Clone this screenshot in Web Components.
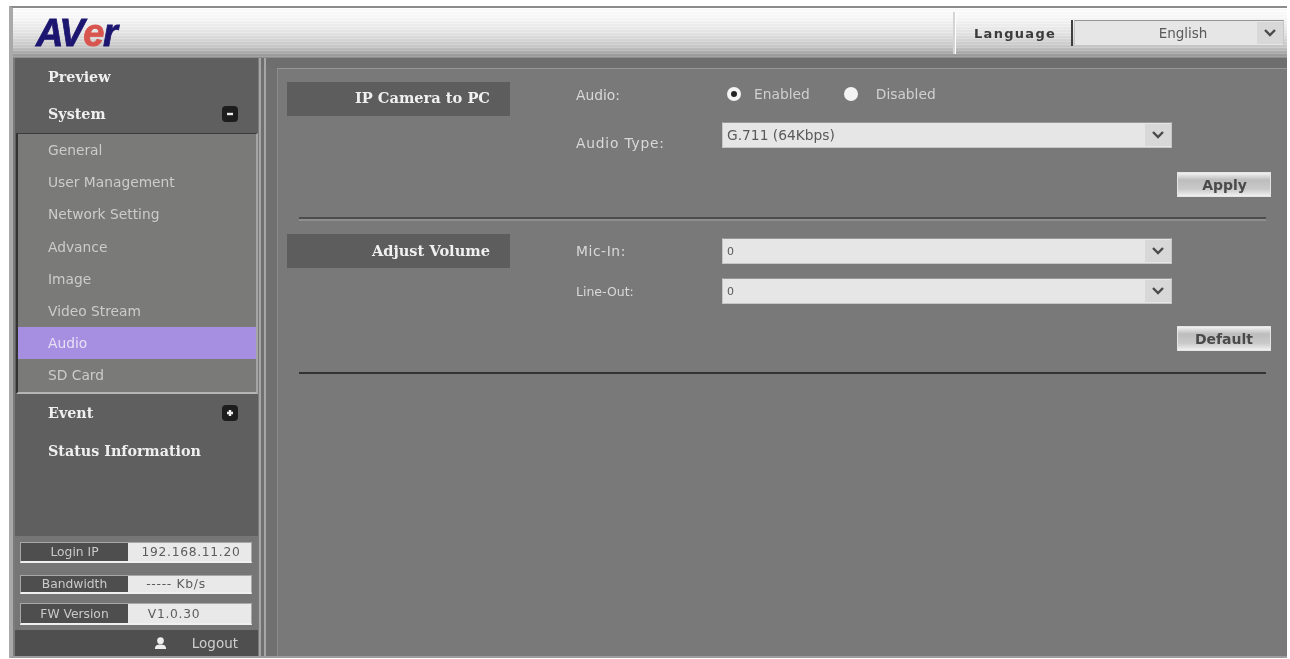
<!DOCTYPE html>
<html><head><meta charset="utf-8"><title>AVer</title>
<style>
html,body{margin:0;padding:0;background:#fff;height:100%;overflow:hidden}
body{font-family:"DejaVu Sans",sans-serif}
</style></head><body>
<template id="t-app"><style>
:host{display:flex;flex-direction:column;box-sizing:border-box;width:1278px;height:652px;margin:6px 0 0 9px;border-top:2px solid #8c8c8c;border-left:4px solid #a9a9a9;border-bottom:2px solid #9c9c9c;filter:blur(.55px);background:#7b7b7b}
.main{flex:1;display:flex;min-height:0}
</style><slot name="header"></slot><div class="main"><slot name="side"></slot><slot name="content"></slot></div></template>

<template id="t-header"><style>
:host{display:flex;align-items:center;height:50px;flex:none;background:repeating-linear-gradient(rgba(255,255,255,.12) 0 1px,rgba(0,0,0,.02) 1px 3px),linear-gradient(#fff 0,#fbfbfb 18%,#e6e6e6 50%,#c9c9c9 78%,#8e8e8e 100%)}
.logo{font:italic 900 38px "Liberation Sans",sans-serif;-webkit-text-stroke:.8px #1c1670;color:#1c1670;letter-spacing:-1.4px;margin-left:23px;line-height:40px;margin-top:-1px}
.logo b{color:#d8544e;-webkit-text-stroke:.8px #d8544e;font-weight:bold}
.sp{flex:1}
.div{width:2px;height:42px;background:#d4d4d4;border-right:1px solid #fff;margin-right:18px}
.lang{font:bold 13px "DejaVu Sans",sans-serif;color:#3b3b3b;letter-spacing:1.3px;width:97px}
.sep{width:2px;height:26px;background:#3f3f3f;margin-right:1px}
.sel{margin-right:3px}
</style><div class="logo">AV<b>e</b>r</div><div class="sp"></div><div class="div"></div><div class="lang">Language</div><div class="sep"></div><div class="sel"><slot></slot></div></template>

<template id="t-select"><style>
:host{display:flex;align-items:center;box-sizing:border-box;height:26px;background:#e6e6e6;border:1px solid #c6c6c6;border-top-color:#979797;color:#5a5a5a;font:13.8px "DejaVu Sans",sans-serif}
.v{flex:1;padding-left:4px}
:host([small]) .v{font-size:11px}
:host([center]) .v{text-align:center;padding-left:34px;font-size:13.5px}
.a{width:26px;height:22px;background:#d8d8d8;display:flex;align-items:center;justify-content:center}
svg{width:14px;height:10px}
</style><div class="v"><slot></slot></div><div class="a"><svg viewBox="0 0 14 10"><path d="M2 2l5 5 5-5" fill="none" stroke="#4a4a4a" stroke-width="2.4"/></svg></div></template>

<template id="t-side"><style>
:host{display:flex;flex-direction:column;width:243px;margin-left:2px;background:#5f5f5f;flex:none}
.sub{display:block;box-sizing:border-box;background:#7a7a78;border-left:2px solid #333;border-right:2px solid #a5a5a5;border-bottom:2px solid #b5b5b5;border-top:1px solid #3c3c3c;margin-left:1px}
.sp{flex:1}
.st{background:#767676;padding:6px 0 0;height:94px;box-sizing:border-box}
</style><slot name="top"></slot><div class="sub"><slot name="sub"></slot></div><slot name="mid"></slot><div class="sp"></div><div class="st"><slot name="status"></slot></div><slot name="logout"></slot></template>

<template id="t-nav"><style>
:host{display:flex;align-items:center;height:38px;padding-left:33px;padding-right:20px;color:#efefef;font:bold 14.3px "DejaVu Serif",serif}
:host([first]){height:37px}
.t{flex:1}
.i{width:16px;height:16px;border-radius:4px;background:#1d1d1d;display:none;align-items:center;justify-content:center}
:host([icon]) .i{display:flex}
svg{width:10px;height:10px}
</style><span class="t"><slot></slot></span><span class="i"><svg viewBox="0 0 10 10"><path id="p" d="M2 5h6" stroke="#eee" stroke-width="2.4"/></svg></span></template>

<template id="t-sub"><style>
:host{display:flex;align-items:center;height:32.2px;padding-left:30px;color:#cccccc;font:13.8px "DejaVu Sans",sans-serif}
:host([active]){background:#a68ee0;color:#e8e0f6}
</style><slot></slot></template>

<template id="t-status"><style>
:host{display:flex;box-sizing:border-box;height:21px;margin:0 6px 0 5px;width:232px;border:1px solid #a8a8a8;border-bottom:2px solid #f0f0f0;font:12.3px "DejaVu Sans",sans-serif}
.l{width:107px;background:#4e4e4e;color:#cacaca;text-align:center;line-height:var(--lh,18px)}
.v{flex:1;background:#e9e9e9;color:#5c5c5c;text-align:center;line-height:var(--lh,18px);letter-spacing:.7px;box-sizing:border-box;padding:var(--vp,0 0 0 3px)}
</style><div class="l"><slot name="l"></slot></div><div class="v"><slot></slot></div></template>

<template id="t-logout"><style>
:host{display:flex;align-items:center;justify-content:flex-end;height:26px;padding-right:20px;color:#cfcfcf;font:13.5px "DejaVu Sans",sans-serif;gap:25px;background:#4f4f4f}
svg{width:13px;height:14px}
</style><svg viewBox="0 0 14 14"><circle cx="7" cy="4.500" r="3.600" fill="#eee"/><path d="M1 13.500c0-4 2.500-4.800 6-4.800s6 .8 6 4.800z" fill="#eee"/></svg><slot></slot></template>

<template id="t-content"><style>
:host{display:block;flex:1;margin-left:1px;border-left:2px solid #a6a6a6;min-width:0;background:linear-gradient(#6e6e6e 0 10px,#707070 10px);padding-left:3px}
.mid{box-sizing:border-box;height:100%;border-left:2px solid #a6a6a6;padding:10px 0 0 11px}
.in{box-sizing:border-box;height:100%;border-top:1px solid #969696;border-left:1px solid #8c8c8c;padding:13px 16px 0 9px;background:#797979}
</style><div class="mid"><div class="in"><slot></slot></div></div></template>

<template id="t-section"><style>
:host{display:block}
.wrap{display:flex}
.head{box-sizing:border-box;width:223px;height:34px;background:#5d5d5d;color:#f0f0f0;font:bold 14.6px "DejaVu Serif",serif;text-align:right;padding-right:20px;line-height:var(--hl,32px);flex:none}
.body{margin-left:66px;flex:1;padding-top:var(--bp,0)}
.act{display:flex;justify-content:flex-end;margin-top:var(--act,24px)}
hr{margin:var(--hr,20px) 5px 0 12px;border:0;height:2px;background:var(--line,#4c4c4c);box-shadow:0 2px 0 var(--glow,#8e8e8e)}
</style><div class="wrap"><div class="head"><slot name="title"></slot></div><div class="body"><slot></slot><div class="act"><slot name="act"></slot></div></div></div><hr></template>

<template id="t-row"><style>
:host{display:flex;align-items:center;height:var(--h,26px);margin-bottom:var(--mb,14px);color:#d9d9d9;font:13.8px "DejaVu Sans",sans-serif}
.l{width:146px;flex:none;position:relative;top:var(--lt,0)}
.c{width:450px;flex:none}
</style><div class="l"><slot name="label"></slot></div><div class="c"><slot></slot></div></template>

<template id="t-radio"><style>
:host{display:inline-flex;align-items:center;color:#d0d0d0;font:13.8px "DejaVu Sans",sans-serif;margin-left:5px}
i{box-sizing:border-box;width:14px;height:14px;border-radius:50%;background:#f4f4f4;margin-right:var(--rg,13px);display:block}
:host([checked]) i{border:4px solid #f4f4f4;background:#222}
</style><i></i><slot></slot></template>

<template id="t-btn"><style>
:host{display:flex;align-items:center;justify-content:flex-end;box-sizing:border-box;width:94px;height:25px;padding-right:var(--br,23px);background:linear-gradient(#f2f2f2,#bdbdbd 30%,#c9c9c9 70%,#f0f0f0);border:1px solid #e4e4e4;color:#4a4a4a;font:bold 14px "DejaVu Sans",sans-serif}
</style><slot></slot></template>

<av-app>
  <av-header slot="header"><av-select center style="width:210px">English</av-select></av-header>
  <av-side slot="side">
    <av-nav slot="top" first>Preview</av-nav>
    <av-nav slot="top" icon="minus">System</av-nav>
    <av-sub slot="sub">General</av-sub>
    <av-sub slot="sub">User Management</av-sub>
    <av-sub slot="sub">Network Setting</av-sub>
    <av-sub slot="sub">Advance</av-sub>
    <av-sub slot="sub">Image</av-sub>
    <av-sub slot="sub">Video Stream</av-sub>
    <av-sub slot="sub" active>Audio</av-sub>
    <av-sub slot="sub">SD Card</av-sub>
    <av-nav slot="mid" icon="plus">Event</av-nav>
    <av-nav slot="mid">Status Information</av-nav>
    <av-status slot="status"><span slot="l">Login IP</span>192.168.11.20</av-status>
    <av-status slot="status" style="margin-top:12px;height:19px;--lh:17px;--vp:0 27px 0 0"><span slot="l">Bandwidth</span>----- Kb/s</av-status>
    <av-status slot="status" style="margin-top:9px;height:22px;--lh:20px;--vp:0 31px 0 0"><span slot="l">FW Version</span>V1.0.30</av-status>
    <av-logout slot="logout">Logout</av-logout>
  </av-side>
  <av-content slot="content">
    <av-section>
      <span slot="title">IP Camera to PC</span>
      <av-row><span slot="label">Audio:</span><av-radio checked>Enabled</av-radio><av-radio style="margin-left:34px;--rg:18px">Disabled</av-radio></av-row>
      <av-row style="--mb:0;--lt:8px"><span slot="label" style="letter-spacing:.8px">Audio Type:</span><av-select>G.711 (64Kbps)</av-select></av-row>
      <av-btn slot="act">Apply</av-btn>
    </av-section>
    <av-section style="--line:#333;--hr:21px;--glow:transparent;--bp:4px;--act:22px;margin-top:15px;--hl:34px">
      <span slot="title">Adjust Volume</span>
      <av-row><span slot="label" style="letter-spacing:.6px">Mic-In:</span><av-select small>0</av-select></av-row>
      <av-row style="--mb:0"><span slot="label" style="font-size:12.5px">Line-Out:</span><av-select small>0</av-select></av-row>
      <av-btn slot="act" style="--br:17px">Default</av-btn>
    </av-section>
  </av-content>
</av-app>
<script>
for (const [tag,id] of [['av-app','t-app'],['av-header','t-header'],['av-select','t-select'],['av-side','t-side'],['av-sub','t-sub'],['av-status','t-status'],['av-logout','t-logout'],['av-content','t-content'],['av-section','t-section'],['av-row','t-row'],['av-radio','t-radio'],['av-btn','t-btn']]) {
  customElements.define(tag, class extends HTMLElement {
    constructor(){super();this.attachShadow({mode:'open'}).appendChild(document.getElementById(id).content.cloneNode(true));}
  });
}
customElements.define('av-nav', class extends HTMLElement {
  constructor(){super();const r=this.attachShadow({mode:'open'});r.appendChild(document.getElementById('t-nav').content.cloneNode(true));
    if(this.getAttribute('icon')==='plus')r.getElementById('p').setAttribute('d','M2 5h6M5 2v6');}
});
</script>
</body></html>
